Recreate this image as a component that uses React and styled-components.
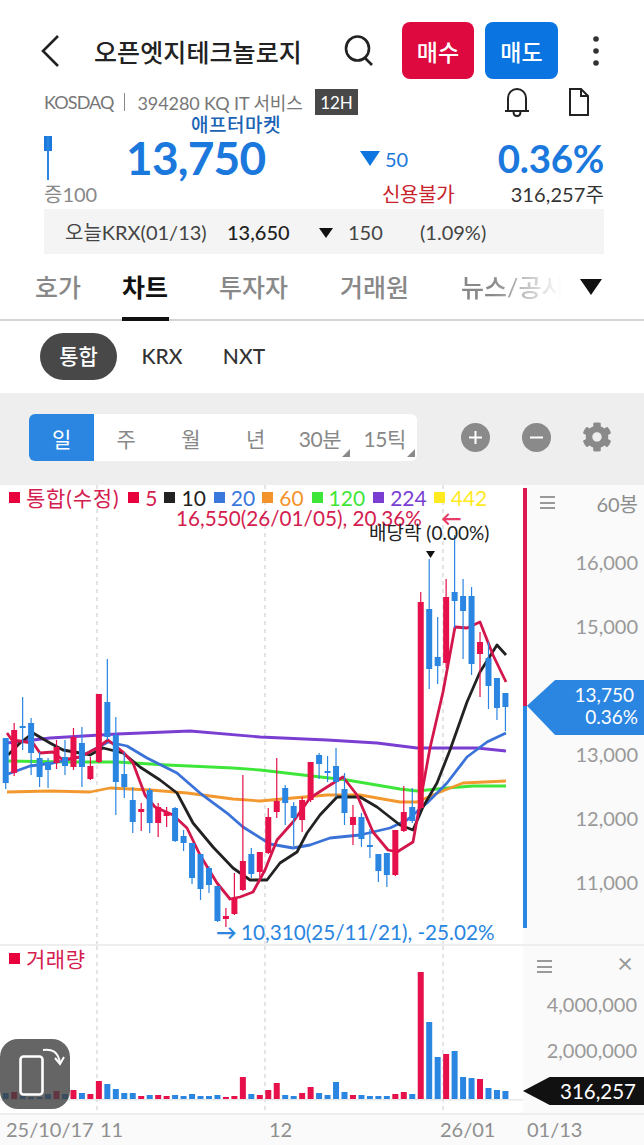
import React from "react";
import styled, { createGlobalStyle } from "styled-components";
import { FaCog } from "react-icons/fa";

const RED = "#e6104a";
const BLUE = "#2b86e2";
const CRIMSON = "#d4204f";

const GlobalStyle = createGlobalStyle`
  html, body {
    margin: 0;
    padding: 0;
    background: #fff;
  }
  body {
    font-family: Lato, "Noto Sans CJK KR", sans-serif;
  }
`;

const Page = styled.div`
  width: 644px;
  height: 1145px;
  overflow: hidden;
  background: #fff;
`;

/* ---------- header ---------- */
const TopBar = styled.header`
  height: 88px;
  box-sizing: border-box;
  padding: 22px 0 9px 40px;
  display: flex;
  align-items: center;
`;

const Title = styled.h1`
  margin: 0 0 0 34px;
  width: 250px;
  font-size: 25px;
  font-weight: 500;
  letter-spacing: 0.1px;
  color: #222;
  white-space: nowrap;
`;

const IconSlot = styled.div`
  display: flex;
  align-items: center;
  justify-content: center;
  flex: none;
  margin-left: ${(p) => p.$ml || 0}px;
`;

const TradeButton = styled.button`
  width: ${(p) => p.$w}px;
  height: 57px;
  margin-left: ${(p) => p.$ml}px;
  border: 0;
  border-radius: 8px;
  background: ${(p) => p.$bg};
  color: #fff;
  font-family: inherit;
  font-size: 23px;
  font-weight: 500;
  padding: 0;
`;

const SubRow = styled.div`
  height: 28px;
  padding-left: 44px;
  display: flex;
  align-items: center;
`;

const SubText = styled.div`
  width: 271px;
  font-size: 18px;
  color: #777;
  letter-spacing: -0.1px;
  white-space: nowrap;
  display: flex;
  align-items: center;
`;

const Market = styled.span`
  letter-spacing: -0.9px;
`;

const SubDivider = styled.span`
  width: 1px;
  height: 18px;
  margin: 0 13px 0 10px;
  background: #888;
`;

const SessionTag = styled.span`
  width: 43px;
  height: 26px;
  background: #484848;
  color: #fff;
  font-size: 17px;
  display: flex;
  align-items: center;
  justify-content: center;
`;

const AfterMarket = styled.div`
  height: 18px;
  line-height: 18px;
  padding-left: 191px;
  font-size: 19px;
  font-weight: 500;
  letter-spacing: 0.5px;
  color: #1b63b4;
`;

const PriceRow = styled.div`
  height: 48px;
  padding: 0 40px 0 44px;
  display: flex;
  align-items: center;
  position: relative;
`;

const MiniCandle = styled.div`
  width: 8px;
  height: 44px;
  flex: none;
  background: linear-gradient(${BLUE}, ${BLUE}) 3px 0 / 2px 44px no-repeat,
    linear-gradient(#1b78dc, #1b78dc) 0 0 / 8px 15px no-repeat;
`;

const Price = styled.span`
  width: 234px;
  margin-left: 74px;
  font-size: 46px;
  font-weight: 700;
  line-height: 48px;
  color: #1b78dc;
  letter-spacing: -0.8px;
`;

const DownArrow = styled.span`
  width: 0;
  height: 0;
  border-left: ${(p) => p.$size}px solid transparent;
  border-right: ${(p) => p.$size}px solid transparent;
  border-top: ${(p) => p.$size * 1.5}px solid ${(p) => p.$color};
  flex: none;
`;

const ChangeValue = styled.span`
  margin-left: 5px;
  font-size: 20px;
  color: #1b78dc;
  padding-top: 2px;
`;

const Percent = styled.span`
  margin-left: auto;
  font-size: 38.5px;
  font-weight: 700;
  color: #1b78dc;
  letter-spacing: -0.3px;
`;

const MetaRow = styled.div`
  height: 27px;
  box-sizing: border-box;
  padding: 0 40px 4px 44px;
  display: flex;
  align-items: center;
  font-size: 20px;
`;

const Deposit = styled.span`
  width: 338px;
  color: #888;
`;

const Credit = styled.span`
  color: #c8232c;
  letter-spacing: -0.3px;
`;

const Volume = styled.span`
  margin-left: auto;
  color: #333;
  letter-spacing: 0.1px;
`;

const KrxBar = styled.div`
  margin: 0 40px 0 44px;
  height: 45px;
  background: #f4f4f4;
  display: flex;
  align-items: center;
  padding-left: 21px;
  font-size: 20px;
  color: #444;
`;

const KrxCell = styled.span`
  width: ${(p) => p.$w}px;
  color: ${(p) => p.$color || "#444"};
  font-weight: ${(p) => p.$weight || 400};
  white-space: nowrap;
  flex: none;
`;

const KrxArrow = styled(DownArrow)`
  display: inline-block;
  vertical-align: 2px;
`;

/* ---------- tabs ---------- */
const Tabs = styled.nav`
  height: 67px;
  box-sizing: border-box;
  border-bottom: 2px solid #d4d4d4;
  padding-left: 35px;
  display: flex;
  align-items: stretch;
  position: relative;
`;

const Tab = styled.div`
  width: ${(p) => p.$w}px;
  margin-right: ${(p) => p.$mr || 0}px;
  flex: none;
  font-size: 25px;
  line-height: 66px;
  white-space: nowrap;
  overflow: hidden;
  color: ${(p) => (p.$active ? "#111" : "#888")};
  font-weight: ${(p) => (p.$active ? 700 : 500)};
  height: ${(p) => (p.$active ? "67px" : "65px")};
  box-sizing: border-box;
  border-bottom: ${(p) => (p.$active ? "4px solid #111" : "0")};
  ${(p) =>
    p.$fade &&
    "-webkit-mask-image: linear-gradient(90deg, #000 30%, transparent 100%); mask-image: linear-gradient(90deg, #000 30%, transparent 100%);"}
`;

const TabMore = styled.div`
  margin-left: 18px;
  align-self: center;
  display: flex;
`;

const PillRow = styled.div`
  height: 72px;
  box-sizing: border-box;
  padding: 12px 0 0 40px;
  display: flex;
  align-items: flex-start;
`;

const Pill = styled.div`
  width: ${(p) => p.$w}px;
  height: 47px;
  box-sizing: border-box;
  padding-bottom: 3px;
  border-radius: 24px;
  background: ${(p) => (p.$active ? "#484848" : "transparent")};
  color: ${(p) => (p.$active ? "#fff" : "#333")};
  font-size: 21px;
  font-weight: 500;
  display: flex;
  align-items: center;
  justify-content: center;
`;

/* ---------- toolbar ---------- */
const Toolbar = styled.div`
  height: 92px;
  box-sizing: border-box;
  background: #eeeeee;
  padding: 21px 0 0 29px;
  display: flex;
  align-items: flex-start;
`;

const Periods = styled.div`
  width: 388px;
  height: 47px;
  background: #fff;
  border-radius: 6px;
  overflow: hidden;
  display: flex;
`;

const Period = styled.div`
  flex: 1;
  position: relative;
  display: flex;
  align-items: center;
  justify-content: center;
  background: ${(p) => (p.$active ? BLUE : "transparent")};
  color: ${(p) => (p.$active ? "#fff" : "#888")};
  font-size: 21px;
  letter-spacing: -0.4px;
  &::after {
    content: "";
    display: ${(p) => (p.$menu ? "block" : "none")};
    position: absolute;
    right: 2px;
    bottom: 4px;
    border-left: 8px solid transparent;
    border-bottom: 8px solid #8a8a8a;
  }
`;

const RoundButton = styled.div`
  width: 29px;
  height: 29px;
  margin: 9px 0 0 ${(p) => p.$ml}px;
  border-radius: 50%;
  background: #8a8a8a;
  display: flex;
  align-items: center;
  justify-content: center;
  flex: none;
`;

const GearButton = styled.div`
  margin: 8px 0 0 31px;
  color: #8a8a8a;
  display: flex;
`;

/* ---------- chart ---------- */
const ChartWrap = styled.section`
  position: relative;
  height: 660px;
`;

const PanelRow = styled.div`
  display: grid;
  grid-template-columns: 523px 121px;
  height: ${(p) => p.$h}px;
`;

const Plot = styled.div`
  position: relative;
  overflow: hidden;
`;

const PlotSvg = styled.svg`
  display: block;
`;

const Axis = styled.div`
  background: #fafafa;
  position: relative;
  display: ${(p) => (p.$stack ? "block" : "flex")};
`;

const RangeBar = styled.div`
  width: 4px;
  flex: none;
  display: flex;
  flex-direction: column;
  padding-top: 3px;
`;

const RangeSegment = styled.div`
  height: ${(p) => p.$h}px;
  background: ${(p) => p.$color};
`;

const AxisBody = styled.div`
  flex: 1;
  padding: 0 6px 0 13px;
`;

const AxisHead = styled.div`
  height: 25px;
  margin-bottom: 20px;
  display: flex;
  align-items: flex-end;
  justify-content: space-between;
  color: #8d8d8d;
  font-size: 20px;
  line-height: 25px;
`;

const BarCount = styled.span`
  margin-bottom: -7px;
`;

const MenuGlyph = styled.div`
  width: 15px;
  height: 13px;
  margin-bottom: 1px;
  background: linear-gradient(#999, #999) 0 0 / 15px 2px no-repeat,
    linear-gradient(#999, #999) 0 5.5px / 15px 2px no-repeat,
    linear-gradient(#999, #999) 0 11px / 15px 2px no-repeat;
`;

const Tick = styled.div`
  height: ${(p) => p.$h}px;
  display: flex;
  align-items: center;
  justify-content: flex-end;
  color: #999;
  font-size: 20px;
`;

const PriceTag = styled.div`
  position: absolute;
  left: 4px;
  top: 195px;
  width: 117px;
  height: 55px;
  box-sizing: border-box;
  padding: 4px 6px 0 0;
  background: ${BLUE};
  clip-path: polygon(0 47%, 24% 0, 100% 0, 100% 100%, 24% 100%);
  color: #fff;
  font-size: 19px;
  line-height: 22px;
  text-align: right;
`;

const PriceTagLine = styled.div`
  padding-right: ${(p) => p.$pr || 0}px;
`;

const Legend = styled.div`
  position: absolute;
  left: 9px;
  top: 0;
  height: 24px;
  display: flex;
  align-items: center;
  font-size: 21px;
  white-space: nowrap;
`;

const LegendItem = styled.span`
  color: ${(p) => p.$color};
  margin-right: ${(p) => p.$mr}px;
  display: flex;
  align-items: center;
  letter-spacing: ${(p) => p.$spacing || 0}px;
  &::before {
    content: "";
    width: 11px;
    height: 11px;
    margin-right: 6px;
    background: ${(p) => p.$mark || p.$color};
    flex: none;
  }
`;

const ChartNote = styled.span`
  position: absolute;
  left: ${(p) => p.$x}px;
  top: ${(p) => p.$y}px;
  font-size: ${(p) => p.$size || 20.7}px;
  font-weight: ${(p) => p.$weight || 400};
  line-height: 24px;
  color: ${(p) => p.$color};
  white-space: nowrap;
`;

const Divider = styled.div`
  height: 2px;
  background: #eeeeee;
`;

const VolumeTag = styled.div`
  position: absolute;
  left: 0;
  top: 131px;
  width: 121px;
  height: 28px;
  box-sizing: border-box;
  padding-right: 8px;
  background: #111;
  clip-path: polygon(0 50%, 22% 0, 100% 0, 100% 100%, 22% 100%);
  color: #fff;
  font-size: 20.5px;
  line-height: 28px;
  text-align: right;
`;

const CloseGlyph = styled.span`
  color: #999;
  font-size: 27px;
  line-height: 22px;
`;

const VolumeHead = styled.div`
  height: 28px;
  padding: 0 11px 0 14px;
  display: flex;
  align-items: flex-end;
  justify-content: space-between;
`;

const VolumeTicks = styled.div`
  padding: 7px 7px 0 0;
`;

const DateRow = styled.div`
  height: 32px;
  border-top: 2px solid #eeeeee;
  box-sizing: border-box;
  background: #fafafa;
  position: relative;
  color: #8f8f8f;
  font-size: 20px;
`;

const DateLabel = styled.span`
  position: absolute;
  left: ${(p) => p.$x}px;
  top: 0;
  line-height: 29px;
`;

const RotateButton = styled.div`
  position: absolute;
  left: 0;
  top: 554px;
  width: 70px;
  height: 70px;
  border-radius: 18px;
  background: rgba(62, 62, 62, 0.8);
`;

/* high, body top, body bottom, low (page y), colour */
const candles = [
  [738, 738, 783, 789, "b"], [723, 730, 773, 776, "r"], [697, 726, 728, 750, "b"],
  [718, 723, 753, 775, "b"], [752, 758, 777, 787, "b"], [758, 762, 770, 788, "b"],
  [740, 747, 763, 769, "r"], [740, 757, 766, 775, "b"], [728, 737, 767, 770, "r"],
  [727, 743, 767, 787, "b"], [757, 766, 779, 780, "r"], [694, 694, 762, 763, "r"],
  [659, 702, 737, 740, "b"], [717, 735, 782, 815, "b"], [752, 774, 787, 798, "b"],
  [787, 800, 822, 833, "b"], [803, 809, 812, 831, "r"], [788, 790, 823, 833, "b"],
  [803, 807, 823, 837, "r"], [807, 812, 816, 827, "r"], [807, 808, 841, 842, "b"],
  [830, 836, 843, 851, "b"], [843, 843, 878, 884, "b"], [854, 854, 889, 900, "b"],
  [866, 868, 885, 893, "b"], [886, 886, 921, 922, "b"], [908, 916, 919, 927, "r"],
  [873, 898, 914, 915, "r"], [775, 861, 890, 891, "r"], [848, 854, 874, 878, "b"],
  [852, 852, 872, 877, "r"], [808, 817, 853, 854, "r"], [758, 801, 812, 818, "r"],
  [785, 788, 803, 825, "b"], [802, 806, 818, 846, "b"], [797, 800, 820, 832, "r"],
  [762, 762, 800, 802, "r"], [753, 755, 764, 779, "b"], [756, 771, 773, 782, "b"],
  [748, 766, 782, 797, "b"], [773, 789, 813, 825, "b"], [805, 817, 825, 845, "r"],
  [813, 817, 839, 847, "b"], [829, 845, 847, 858, "b"], [854, 854, 871, 882, "b"],
  [853, 853, 875, 887, "b"], [830, 830, 875, 876, "r"], [786, 812, 831, 832, "r"],
  [788, 807, 821, 823, "b"], [592, 602, 808, 809, "r"], [559, 609, 669, 689, "b"],
  [617, 657, 666, 684, "b"], [579, 597, 663, 668, "r"], [535, 592, 601, 628, "b"],
  [579, 596, 611, 659, "b"], [587, 596, 664, 675, "b"], [632, 642, 654, 697, "r"],
  [642, 658, 686, 709, "b"], [678, 678, 708, 720, "b"], [693, 693, 707, 731, "b"],
];

/* top of each volume bar (page y) */
const volumeTops = [
  1093, 1092, 1096, 1097, 1097, 1094, 1091, 1094, 1090, 1093, 1094, 1081, 1084, 1089, 1093,
  1093, 1096, 1095, 1095, 1096, 1095, 1096, 1094, 1096, 1096, 1095, 1097, 1096, 1077, 1094,
  1095, 1090, 1083, 1095, 1096, 1093, 1087, 1093, 1095, 1082, 1092, 1095, 1095, 1096, 1096,
  1096, 1094, 1092, 1094, 972, 1022, 1057, 1054, 1051, 1077, 1078, 1079, 1088, 1090, 1091,
];

const lines = [
  ["#7a3fd2", "7,743 50,738 117,734 190,731 260,737 327,740 377,743 417,748 437,748 477,748 506,751"],
  ["#3fe63a", "7,761 67,762 117,762 167,765 233,768 260,770 303,775 347,780 400,789 417,791 447,788 473,786 506,786"],
  ["#f3982e", "7,792 50,791 90,792 110,788 150,790 187,793 233,799 260,801 293,798 327,795 360,795 400,802 417,802 440,792 463,783 506,781"],
  ["#3b72d8", "8,774 30,766 53,763 80,757 97,748 108,742 127,746 147,758 177,773 200,793 227,813 243,827 270,844 293,848 310,845 330,838 360,835 390,828 407,820 427,803 447,783 467,757 487,742 506,733"],
  ["#222222", "8,755 20,743 33,733 50,743 63,750 80,753 90,755 103,748 123,753 140,767 160,780 177,793 193,823 213,847 233,868 250,880 267,880 280,863 297,852 307,833 320,815 337,797 360,797 377,807 400,825 413,830 423,807 437,783 450,750 467,702 480,672 497,645 506,655"],
  ["#d3174d", "7,733 12,740 33,743 40,753 53,752 63,760 80,757 97,748 108,740 123,752 133,763 145,795 155,807 173,815 187,828 200,855 217,883 230,899 240,897 253,892 265,870 277,840 293,822 310,798 327,787 343,777 357,795 373,832 388,850 397,852 413,842 420,803 430,748 443,692 455,627 467,628 480,622 493,655 506,682"],
];

const barX = (i) => 5.7 + 8.47 * i;
const tone = (c) => (c === "r" ? RED : BLUE);

const Gridlines = ({ y1, y2 }) =>
  [97, 265, 443].map((x) => (
    <line key={x} x1={x} x2={x} y1={y1} y2={y2} stroke="#dcdcdc" strokeWidth="1.5" strokeDasharray="4 4" />
  ));

const PriceChart = () => (
  <PlotSvg width="523" height="459" viewBox="0 485 523 459">
    <Gridlines y1={485} y2={944} />
    {lines.map(([color, points]) => (
      <polyline key={color} points={points} fill="none" stroke={color} strokeWidth="2.8" strokeLinejoin="round" />
    ))}
    {candles.map(([high, top, bottom, low, c], i) => (
      <g key={i} fill={tone(c)}>
        <rect x={barX(i) - 0.6} y={high} width="1.2" height={low - high} />
        <rect x={barX(i) - 3} y={top} width="6" height={bottom - top} />
      </g>
    ))}
    <polygon points="426,551 435,551 430.5,558" fill="#111" />
  </PlotSvg>
);

const VolumeChart = () => (
  <PlotSvg width="523" height="165" viewBox="0 946 523 165">
    <Gridlines y1={946} y2={1111} />
    <rect x="0" y="1099" width="523" height="1.5" fill="#e8e8e8" />
    {volumeTops.map((top, i) => (
      <rect key={i} x={barX(i) - 3} y={top} width="6" height={1099 - top} fill={tone(candles[i][4])} />
    ))}
  </PlotSvg>
);

const BackIcon = () => (
  <svg width="20" height="34" viewBox="0 0 20 34" fill="none" stroke="#222" strokeWidth="2.6">
    <path d="M18 2 3 17l15 15" />
  </svg>
);

const SearchIcon = () => (
  <svg width="30" height="32" viewBox="0 0 30 32" fill="none" stroke="#222" strokeWidth="2.6">
    <ellipse cx="13.5" cy="13.5" rx="11.5" ry="12" />
    <path d="m21 23 7 7" />
  </svg>
);

const DotsIcon = () => (
  <svg width="8" height="32" viewBox="0 0 8 32" fill="#333">
    <circle cx="4" cy="4" r="2.8" />
    <circle cx="4" cy="16" r="2.8" />
    <circle cx="4" cy="28" r="2.8" />
  </svg>
);

const BellIcon = () => (
  <svg width="26" height="30" viewBox="0 0 26 30" fill="none" stroke="#222" strokeWidth="2">
    <path d="M4 23V11c0-5 4-9 9-9s9 4 9 9v12" />
    <path d="M1 24h24" />
    <path d="M9.5 24.5c0 6 7 6 7 0" />
  </svg>
);

const DocIcon = () => (
  <svg width="22" height="30" viewBox="0 0 22 30" fill="none" stroke="#222" strokeWidth="2">
    <path d="M2 2h11l7 7v19H2z" />
    <path d="M13 2v7h7" />
  </svg>
);

const PlusIcon = ({ minus }) => (
  <svg width="15" height="15" viewBox="0 0 15 15" stroke="#fff" strokeWidth="2">
    <path d="M1 7.5h13" />
    {!minus && <path d="M7.5 1v13" />}
  </svg>
);

const RotateIcon = () => (
  <svg width="70" height="70" viewBox="0 0 70 70" fill="none" stroke="#fff">
    <rect x="20.5" y="17.5" width="22" height="38" rx="3" strokeWidth="2.6" />
    <path d="M43 11c9-1 15 1 17 13" strokeWidth="2" />
    <path d="m55 19 5 6 4-7" strokeWidth="2" />
  </svg>
);

const legend = [
  { label: "통합(수정)", color: CRIMSON, mark: "#e8003c", mr: 9, spacing: 0.8 },
  { label: "5", color: CRIMSON, mark: "#e8003c", mr: 7 },
  { label: "10", color: "#222", mr: 8 },
  { label: "20", color: "#3b78dc", mr: 7 },
  { label: "60", color: "#f3932c", mr: 8 },
  { label: "120", color: "#3fe63a", mr: 8 },
  { label: "224", color: "#7a3fd2", mr: 7 },
  { label: "442", color: "#ffe91f", mr: 0 },
];

const periods = [
  { label: "일", active: true },
  { label: "주" },
  { label: "월" },
  { label: "년" },
  { label: "30분", menu: true },
  { label: "15틱", menu: true },
];

export default function App() {
  return (
    <Page>
      <GlobalStyle />
      <TopBar>
        <IconSlot>
          <BackIcon />
        </IconSlot>
        <Title>오픈엣지테크놀로지</Title>
        <IconSlot>
          <SearchIcon />
        </IconSlot>
        <TradeButton $w={72} $ml={28} $bg="#de0a3f">매수</TradeButton>
        <TradeButton $w={73} $ml={11} $bg="#0a74e0">매도</TradeButton>
        <IconSlot $ml={34}>
          <DotsIcon />
        </IconSlot>
      </TopBar>
      <SubRow>
        <SubText>
          <Market>KOSDAQ</Market>
          <SubDivider />
          394280 KQ IT 서비스
        </SubText>
        <SessionTag>12H</SessionTag>
        <IconSlot $ml={146}>
          <BellIcon />
        </IconSlot>
        <IconSlot $ml={38}>
          <DocIcon />
        </IconSlot>
      </SubRow>
      <AfterMarket>애프터마켓</AfterMarket>
      <PriceRow>
        <MiniCandle />
        <Price>13,750</Price>
        <DownArrow $size={10.5} $color="#0f76df" />
        <ChangeValue>50</ChangeValue>
        <Percent>0.36%</Percent>
      </PriceRow>
      <MetaRow>
        <Deposit>증100</Deposit>
        <Credit>신용불가</Credit>
        <Volume>316,257주</Volume>
      </MetaRow>
      <KrxBar>
        <KrxCell $w={162}>오늘KRX(01/13)</KrxCell>
        <KrxCell $w={92} $color="#222" $weight={500}>13,650</KrxCell>
        <KrxCell $w={29}>
          <KrxArrow $size={7} $color="#111" />
        </KrxCell>
        <KrxCell $w={72}>150</KrxCell>
        <KrxCell $w={80}>(1.09%)</KrxCell>
      </KrxBar>
      <Tabs>
        <Tab $w={48} $mr={39}>호가</Tab>
        <Tab $w={47} $mr={50} $active>차트</Tab>
        <Tab $w={69} $mr={52}>투자자</Tab>
        <Tab $w={69} $mr={52}>거래원</Tab>
        <Tab $w={101} $fade>뉴스/공시</Tab>
        <TabMore>
          <DownArrow $size={11} $color="#111" />
        </TabMore>
      </Tabs>
      <PillRow>
        <Pill $w={77} $active>통합</Pill>
        <Pill $w={90}>KRX</Pill>
        <Pill $w={74}>NXT</Pill>
      </PillRow>
      <Toolbar>
        <Periods>
          {periods.map((p) => (
            <Period key={p.label} $active={p.active} $menu={p.menu}>
              {p.label}
            </Period>
          ))}
        </Periods>
        <RoundButton $ml={44}>
          <PlusIcon />
        </RoundButton>
        <RoundButton $ml={32}>
          <PlusIcon minus />
        </RoundButton>
        <GearButton>
          <FaCog size={30} />
        </GearButton>
      </Toolbar>
      <ChartWrap>
        <PanelRow $h={459}>
          <Plot>
            <PriceChart />
            <Legend>
              {legend.map((item) => (
                <LegendItem
                  key={item.label}
                  $color={item.color}
                  $mark={item.mark}
                  $mr={item.mr}
                  $spacing={item.spacing}
                >
                  {item.label}
                </LegendItem>
              ))}
            </Legend>
            <ChartNote $x={176} $y={21} $color={CRIMSON}>16,550(26/01/05), 20.36%</ChartNote>
            <ChartNote $x={441} $y={21} $weight={700} $color="#ea3b68">←</ChartNote>
            <ChartNote $x={369} $y={36} $size={19} $color="#222">배당락 (0.00%)</ChartNote>
            <ChartNote $x={216} $y={435} $weight={700} $color="#2a85df">→</ChartNote>
            <ChartNote $x={241} $y={435} $color="#2a85df">10,310(25/11/21), -25.02%</ChartNote>
          </Plot>
          <Axis>
            <RangeBar>
              <RangeSegment $h={218} $color="#dc1a50" />
              <RangeSegment $h={222} $color={BLUE} />
            </RangeBar>
            <AxisBody>
              <AxisHead>
                <MenuGlyph />
                <BarCount>60봉</BarCount>
              </AxisHead>
              <Tick $h={64}>16,000</Tick>
              <Tick $h={64}>15,000</Tick>
              <Tick $h={64} />
              <Tick $h={64}>13,000</Tick>
              <Tick $h={64}>12,000</Tick>
              <Tick $h={64}>11,000</Tick>
            </AxisBody>
            <PriceTag>
              <PriceTagLine $pr={4}>13,750</PriceTagLine>
              <PriceTagLine>0.36%</PriceTagLine>
            </PriceTag>
          </Axis>
        </PanelRow>
        <Divider />
        <PanelRow $h={167}>
          <Plot>
            <VolumeChart />
            <Legend>
              <LegendItem $color={CRIMSON} $mark="#e8003c" $mr={0} $spacing={0.5}>거래량</LegendItem>
            </Legend>
          </Plot>
          <Axis $stack>
            <VolumeHead>
              <MenuGlyph />
              <CloseGlyph>×</CloseGlyph>
            </VolumeHead>
            <VolumeTicks>
              <Tick $h={46}>4,000,000</Tick>
              <Tick $h={46}>2,000,000</Tick>
            </VolumeTicks>
            <VolumeTag>316,257</VolumeTag>
          </Axis>
        </PanelRow>
        <DateRow>
          <DateLabel $x={6}>25/10/17</DateLabel>
          <DateLabel $x={100}>11</DateLabel>
          <DateLabel $x={269}>12</DateLabel>
          <DateLabel $x={440}>26/01</DateLabel>
          <DateLabel $x={527}>01/13</DateLabel>
        </DateRow>
        <RotateButton>
          <RotateIcon />
        </RotateButton>
      </ChartWrap>
    </Page>
  );
}
